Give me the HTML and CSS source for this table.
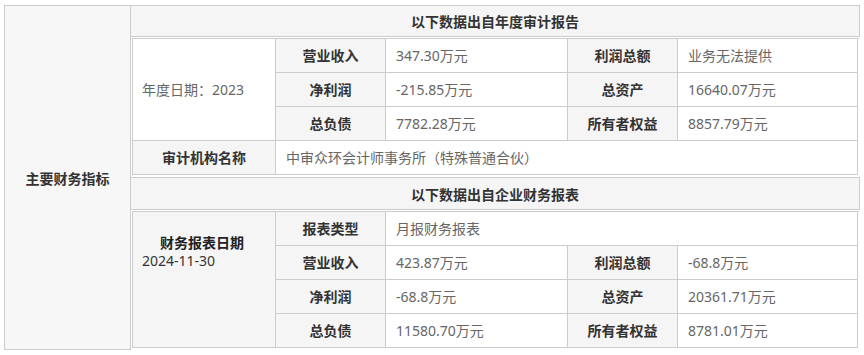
FILE: index.html
```html
<!DOCTYPE html>
<html lang="zh-CN">
<head>
<meta charset="utf-8">
<title>主要财务指标</title>
<link rel="stylesheet" href="styles.css">
</head>
<body>
<div class="wrap">
  <div class="side">主要财务指标</div>
  <div class="main">
    <div class="head">以下数据出自年度审计报告</div>
    <div class="tbl">
      <div class="date span3">年度日期：2023</div>
      <div class="lab">营业收入</div>
      <div class="val">347.30万元</div>
      <div class="lab">利润总额</div>
      <div class="val">业务无法提供</div>
      <div class="lab">净利润</div>
      <div class="val">-215.85万元</div>
      <div class="lab">总资产</div>
      <div class="val">16640.07万元</div>
      <div class="lab">总负债</div>
      <div class="val">7782.28万元</div>
      <div class="lab">所有者权益</div>
      <div class="val">8857.79万元</div>
      <div class="lab">审计机构名称</div>
      <div class="val span4">中审众环会计师事务所（特殊普通合伙）</div>
    </div>
    <div class="head head2">以下数据出自企业财务报表</div>
    <div class="tbl tbl2">
      <div class="rdate span4r">
        <div class="rdate-title">财务报表日期</div>
        <div class="rdate-val">2024-11-30</div>
      </div>
      <div class="lab">报表类型</div>
      <div class="val span3c">月报财务报表</div>
      <div class="lab">营业收入</div>
      <div class="val">423.87万元</div>
      <div class="lab">利润总额</div>
      <div class="val">-68.8万元</div>
      <div class="lab">净利润</div>
      <div class="val">-68.8万元</div>
      <div class="lab">总资产</div>
      <div class="val">20361.71万元</div>
      <div class="lab">总负债</div>
      <div class="val">11580.70万元</div>
      <div class="lab">所有者权益</div>
      <div class="val">8781.01万元</div>
    </div>
  </div>
</div>
</body>
</html>
```

FILE: styles.css
```css
* { box-sizing: border-box; }
html, body { margin: 0; padding: 0; background: #ffffff; }
body {
  font-family: "Noto Sans", "Noto Sans CJK SC", sans-serif;
  font-size: 14px;
  color: #333333;
}
.wrap {
  display: flex;
  width: 856px;
  height: 345px;
  margin: 5px 0 0 4px;
}
.side {
  width: 127px;
  flex: none;
  border: 1px solid #cccccc;
  background: #f7f7f7;
  display: flex;
  align-items: center;
  justify-content: center;
  font-weight: 700;
  color: #333333;
}
.main {
  width: 729px;
  display: flex;
  flex-direction: column;
}
.head {
  height: 32px;
  border-top: 1px solid #cccccc;
  border-right: 1px solid #cccccc;
  border-bottom: 1px solid #cccccc;
  background: #f5f5f5;
  display: flex;
  align-items: center;
  justify-content: center;
  font-weight: 700;
  color: #333333;
}
.head2 {
  height: 33px;
  margin-top: 2px;
}
.tbl {
  display: grid;
  grid-template-columns: 143px 110px 182px 110px 180px;
  grid-auto-rows: 34px;
  border-left: 1px solid #cccccc;
  border-top: 1px solid #cccccc;
  margin: 1px 1px 0 1px;
}
.tbl > div {
  border-right: 1px solid #cccccc;
  border-bottom: 1px solid #cccccc;
  display: flex;
  align-items: center;
  line-height: 20px;
}
.lab {
  background: #f5f5f5;
  justify-content: center;
  font-weight: 700;
  color: #333333;
}
.val {
  background: #ffffff;
  color: #666666;
  padding-left: 10px;
}
.date {
  background: #ffffff;
  color: #666666;
  padding-left: 9px;
}
.span3 { grid-row: span 3; }
.span4 { grid-column: span 4; }
.span3c { grid-column: span 3; }
.span4r { grid-row: span 4; }
.tbl > .rdate {
  background: #f5f5f5;
  flex-direction: column;
  align-items: stretch;
  justify-content: flex-start;
  padding: 22px 0 0 9px;
  line-height: 18px;
  color: #222222;
}
.rdate-title {
  font-weight: 700;
  padding-left: 18px;
}
.rdate-val {
  color: #333333;
}
```
